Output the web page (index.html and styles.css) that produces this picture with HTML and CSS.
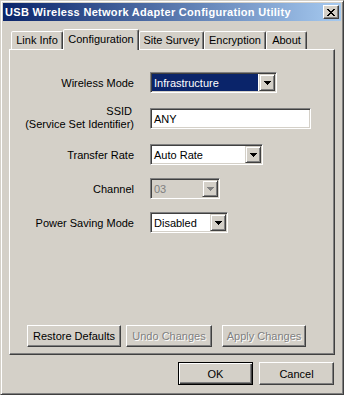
FILE: index.html
```html
<!DOCTYPE html>
<html lang="en">
<head>
  <meta charset="UTF-8">
  <title>USB Wireless Network Adapter Configuration Utility</title>
  <link rel="stylesheet" href="styles.css">
</head>
<body>
  <div class="window">
    <div class="titlebar">
      <span class="title">USB Wireless Network Adapter Configuration Utility</span>
      <button class="close-btn" aria-label="Close">
        <svg width="8" height="7" viewBox="0 0 8 7" shape-rendering="crispEdges">
          <path d="M0 0h2v1H0zM6 0h2v1H6zM1 1h2v1H1zM5 1h2v1H5zM2 2h4v1H2zM3 3h2v1H3zM2 4h4v1H2zM1 5h2v1H1zM5 5h2v1H5zM0 6h2v1H0zM6 6h2v1H6z" fill="#000"/>
        </svg>
      </button>
    </div>

    <div class="dialog">
      <div class="tabs">
        <div class="tab tab-link">Link Info</div>
        <div class="tab tab-config active">Configuration</div>
        <div class="tab tab-survey">Site Survey</div>
        <div class="tab tab-encrypt">Encryption</div>
        <div class="tab tab-about">About</div>
      </div>

      <div class="panel">
        <div class="form">
          <div class="label">Wireless Mode</div>
          <div class="combo w-mode">
            <div class="combo-value selected">Infrastructure</div>
            <div class="combo-btn">
              <svg width="7" height="4" viewBox="0 0 7 4" shape-rendering="crispEdges"><path d="M0 0h7v1H0zM1 1h5v1H1zM2 2h3v1H2zM3 3h1v1H3z" fill="currentColor"/></svg>
            </div>
          </div>

          <div class="label label-stack">
            <span class="label-top">SSID</span>
            <span>(Service Set Identifier)</span>
          </div>
          <div class="field w-ssid">ANY</div>

          <div class="label">Transfer Rate</div>
          <div class="combo w-rate">
            <div class="combo-value">Auto Rate</div>
            <div class="combo-btn">
              <svg width="7" height="4" viewBox="0 0 7 4" shape-rendering="crispEdges"><path d="M0 0h7v1H0zM1 1h5v1H1zM2 2h3v1H2zM3 3h1v1H3z" fill="currentColor"/></svg>
            </div>
          </div>

          <div class="label">Channel</div>
          <div class="combo w-channel disabled">
            <div class="combo-value">03</div>
            <div class="combo-btn">
              <svg width="7" height="4" viewBox="0 0 7 4" shape-rendering="crispEdges"><path d="M0 0h7v1H0zM1 1h5v1H1zM2 2h3v1H2zM3 3h1v1H3z" fill="currentColor"/></svg>
            </div>
          </div>

          <div class="label">Power Saving Mode</div>
          <div class="combo w-power">
            <div class="combo-value">Disabled</div>
            <div class="combo-btn">
              <svg width="7" height="4" viewBox="0 0 7 4" shape-rendering="crispEdges"><path d="M0 0h7v1H0zM1 1h5v1H1zM2 2h3v1H2zM3 3h1v1H3z" fill="currentColor"/></svg>
            </div>
          </div>
        </div>

        <div class="actions">
          <button class="btn btn-restore">Restore Defaults</button>
          <button class="btn btn-undo disabled">Undo Changes</button>
          <button class="btn btn-apply disabled">Apply Changes</button>
        </div>
      </div>

      <div class="footer">
        <button class="btn btn-dlg default">OK</button>
        <button class="btn btn-dlg">Cancel</button>
      </div>
    </div>
  </div>
</body>
</html>
```

FILE: styles.css
```css
/* Classic dialog look */
* {
  margin: 0;
  padding: 0;
  box-sizing: border-box;
}

body {
  width: 344px;
  height: 395px;
  overflow: hidden;
  background: #d4d0c8;
  font-family: "Liberation Sans", Arial, sans-serif;
  font-size: 11px;
  color: #000;
}

button {
  font-family: inherit;
  font-size: 11px;
  color: inherit;
}

.window {
  width: 344px;
  height: 395px;
  display: flex;
  flex-direction: column;
  padding: 2px;
  background: #d4d0c8;
  border: 1px solid;
  border-color: #d4d0c8 #404040 #404040 #d4d0c8;
  box-shadow: inset 1px 1px #fff, inset -1px -1px #808080;
}

/* Title bar */
.titlebar {
  height: 18px;
  display: flex;
  align-items: center;
  justify-content: space-between;
  padding: 0 2px;
  background: linear-gradient(90deg, #0a246a, #a6caf0);
  color: #fff;
  font-weight: bold;
}

.title {
  letter-spacing: 0.3px;
}

.close-btn {
  width: 16px;
  height: 14px;
  display: flex;
  align-items: center;
  justify-content: center;
  background: #d4d0c8;
  border: 1px solid;
  border-color: #fff #404040 #404040 #fff;
  box-shadow: inset -1px -1px #808080;
}

/* Tabs */
.dialog {
  flex: 1;
  display: flex;
  flex-direction: column;
  padding: 8px 6px 0 6px;
}

.tabs {
  height: 20px;
  display: flex;
  align-items: flex-end;
  padding-left: 2px;
  position: relative;
  z-index: 1;
}

.tab {
  height: 18px;
  display: flex;
  align-items: center;
  justify-content: center;
  padding-bottom: 1px;
  background: #d4d0c8;
  border: 1px solid;
  border-bottom: none;
  border-color: #fff #404040 transparent #fff;
  border-radius: 2px 2px 0 0;
  box-shadow: inset -1px 0 #808080;
}

.tab.active {
  height: 21px;
  margin-bottom: -1px;
  padding-bottom: 3px;
}

.tab-link { width: 52px; }
.tab-config { width: 76px; }
.tab-survey { width: 65px; }
.tab-encrypt { width: 62px; }
.tab-about { width: 41px; }

/* Panel */
.panel {
  height: 306px;
  display: flex;
  flex-direction: column;
  padding: 22px 0 7px 0;
  border: 1px solid;
  border-color: #fff #404040 #404040 #fff;
  box-shadow: inset -1px -1px #808080;
}

.form {
  display: grid;
  grid-template-columns: 124px auto;
  column-gap: 16px;
  row-gap: 13px;
  align-items: center;
  justify-items: start;
}

.label {
  justify-self: end;
  text-align: right;
}

.label-stack {
  align-self: start;
  display: flex;
  flex-direction: column;
  align-items: flex-end;
  line-height: 13px;
  margin-top: -1px;
}

.label-top {
  padding-right: 2px;
}

/* Combo boxes and edit field */
.combo,
.field {
  height: 21px;
  display: flex;
  padding: 1px;
  background: #fff;
  border: 1px solid;
  border-color: #808080 #fff #fff #808080;
  box-shadow: inset 1px 1px #404040, inset -1px -1px #d4d0c8;
}

.field {
  align-items: center;
  padding-left: 3px;
}

.combo-value {
  flex: 1;
  display: flex;
  align-items: center;
  padding-left: 2px;
  margin-right: 1px;
}

.combo-value.selected {
  background: #0a246a;
  color: #fff;
}

.combo-btn {
  width: 16px;
  display: flex;
  align-items: center;
  justify-content: center;
  color: #000;
  background: #d4d0c8;
  border: 1px solid;
  border-color: #d4d0c8 #404040 #404040 #d4d0c8;
  box-shadow: inset 1px 1px #fff, inset -1px -1px #808080;
}

.combo.disabled {
  background: #d4d0c8;
  color: #808080;
}

.combo.disabled .combo-btn {
  color: #808080;
}

.w-mode { width: 127px; }
.w-ssid { width: 161px; }
.w-rate { width: 113px; }
.w-channel { width: 70px; }
.w-power { width: 78px; }

/* Buttons */
.btn {
  height: 22px;
  display: flex;
  align-items: center;
  justify-content: center;
  background: #d4d0c8;
  border: 1px solid;
  border-color: #fff #404040 #404040 #fff;
  box-shadow: inset -1px -1px #808080;
}

.btn.disabled {
  color: #808080;
  text-shadow: 1px 1px #fff;
}

.btn.default {
  border-color: #000;
  box-shadow: inset 1px 1px #fff, inset -1px -1px #404040, inset -2px -2px #808080;
}

.actions {
  margin-top: auto;
  display: flex;
  padding-left: 17px;
}

.btn-restore { width: 94px; }
.btn-undo { width: 86px; margin-left: 5px; }
.btn-apply { width: 84px; margin-left: 10px; }

.footer {
  display: flex;
  justify-content: flex-end;
  gap: 6px;
  margin-top: 7px;
  padding-right: 1px;
}

.btn-dlg {
  width: 75px;
  height: 23px;
}
```
